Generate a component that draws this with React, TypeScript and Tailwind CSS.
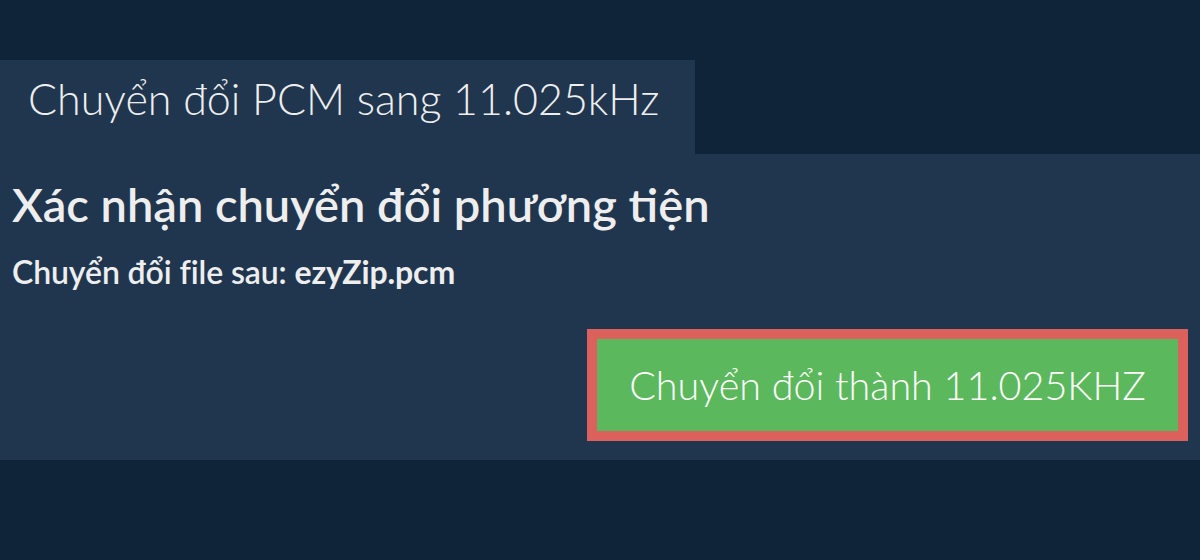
export default function App() {
  return (
    <div className="min-h-[560px] bg-[#0f2339] pt-[60px] font-['Lato','Liberation_Sans',sans-serif] text-[#eeeeee]">
      <div className="w-[695px] h-[94px] bg-[#20364f] pl-[28px] pt-[13px]">
        <h1 className="text-[43px] font-light leading-[1.2]">Chuyển đổi PCM sang 11.025kHz</h1>
      </div>
      <div className="bg-[#20364f] px-3 pt-[22px] pb-[19px]">
        <h2 className="text-[47px] font-semibold leading-[1.2]">Xác nhận chuyển đổi phương tiện</h2>
        <p className="mt-[21px] text-[32px] font-semibold leading-[1.2] tracking-[-0.1px]">
          Chuyển đổi file sau: <b className="font-bold">ezyZip.pcm</b>
        </p>
        <div className="mt-[37px] flex justify-end">
          <button className="w-[601px] h-[112px] border-[10px] border-[#dc605c] bg-[#5cb85c] text-[39.5px] font-light text-white">
            Chuyển đổi thành 11.025KHZ
          </button>
        </div>
      </div>
    </div>
  )
}
